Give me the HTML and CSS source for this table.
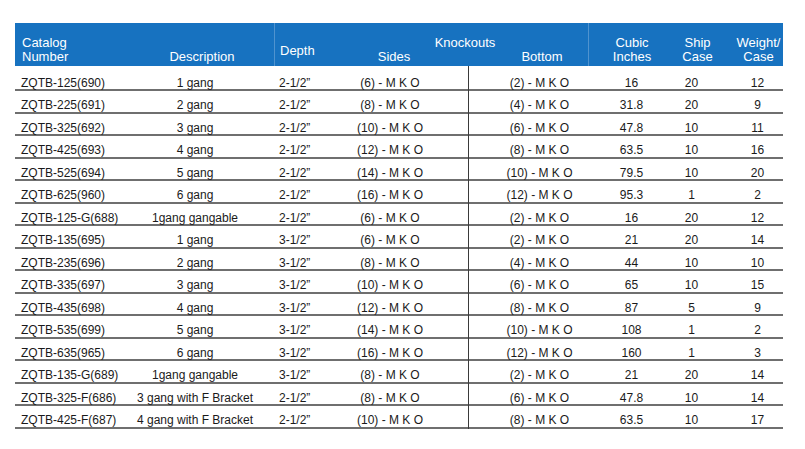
FILE: index.html
```html
<!DOCTYPE html>
<html>
<head>
<meta charset="utf-8">
<link rel="stylesheet" href="styles.css">
</head>
<body>
<div class="sheet">
  <div class="head">
    <div class="h c-cat">Catalog<br>Number</div>
    <div class="h c-desc">Description</div>
    <div class="h c-depth">Depth</div>
    <div class="h c-ko">
      <div class="ko-title">Knockouts</div>
      <div class="ko-sub">
        <span class="ko-sides">Sides</span>
        <span class="ko-bottom">Bottom</span>
      </div>
    </div>
    <div class="h c-cubic">Cubic<br>Inches</div>
    <div class="h c-ship">Ship<br>Case</div>
    <div class="h c-weight">Weight/<br>Case</div>
  </div>
  <div class="body">
    <div class="row first"><div class="cat">ZQTB-125(690)</div><div class="desc">1 gang</div><div class="depth">2-1/2”</div><div class="sides">(6) - M K O</div><div class="bottom">(2) - M K O</div><div class="cubic">16</div><div class="ship">20</div><div class="weight">12</div></div>
    <div class="row"><div class="cat">ZQTB-225(691)</div><div class="desc">2 gang</div><div class="depth">2-1/2”</div><div class="sides">(8) - M K O</div><div class="bottom">(4) - M K O</div><div class="cubic">31.8</div><div class="ship">20</div><div class="weight">9</div></div>
    <div class="row"><div class="cat">ZQTB-325(692)</div><div class="desc">3 gang</div><div class="depth">2-1/2”</div><div class="sides">(10) - M K O</div><div class="bottom">(6) - M K O</div><div class="cubic">47.8</div><div class="ship">10</div><div class="weight">11</div></div>
    <div class="row"><div class="cat">ZQTB-425(693)</div><div class="desc">4 gang</div><div class="depth">2-1/2”</div><div class="sides">(12) - M K O</div><div class="bottom">(8) - M K O</div><div class="cubic">63.5</div><div class="ship">10</div><div class="weight">16</div></div>
    <div class="row"><div class="cat">ZQTB-525(694)</div><div class="desc">5 gang</div><div class="depth">2-1/2”</div><div class="sides">(14) - M K O</div><div class="bottom">(10) - M K O</div><div class="cubic">79.5</div><div class="ship">10</div><div class="weight">20</div></div>
    <div class="row"><div class="cat">ZQTB-625(960)</div><div class="desc">6 gang</div><div class="depth">2-1/2”</div><div class="sides">(16) - M K O</div><div class="bottom">(12) - M K O</div><div class="cubic">95.3</div><div class="ship">1</div><div class="weight">2</div></div>
    <div class="row"><div class="cat">ZQTB-125-G(688)</div><div class="desc">1gang gangable</div><div class="depth">2-1/2”</div><div class="sides">(6) - M K O</div><div class="bottom">(2) - M K O</div><div class="cubic">16</div><div class="ship">20</div><div class="weight">12</div></div>
    <div class="row"><div class="cat">ZQTB-135(695)</div><div class="desc">1 gang</div><div class="depth">3-1/2”</div><div class="sides">(6) - M K O</div><div class="bottom">(2) - M K O</div><div class="cubic">21</div><div class="ship">20</div><div class="weight">14</div></div>
    <div class="row"><div class="cat">ZQTB-235(696)</div><div class="desc">2 gang</div><div class="depth">3-1/2”</div><div class="sides">(8) - M K O</div><div class="bottom">(4) - M K O</div><div class="cubic">44</div><div class="ship">10</div><div class="weight">10</div></div>
    <div class="row"><div class="cat">ZQTB-335(697)</div><div class="desc">3 gang</div><div class="depth">3-1/2”</div><div class="sides">(10) - M K O</div><div class="bottom">(6) - M K O</div><div class="cubic">65</div><div class="ship">10</div><div class="weight">15</div></div>
    <div class="row"><div class="cat">ZQTB-435(698)</div><div class="desc">4 gang</div><div class="depth">3-1/2”</div><div class="sides">(12) - M K O</div><div class="bottom">(8) - M K O</div><div class="cubic">87</div><div class="ship">5</div><div class="weight">9</div></div>
    <div class="row"><div class="cat">ZQTB-535(699)</div><div class="desc">5 gang</div><div class="depth">3-1/2”</div><div class="sides">(14) - M K O</div><div class="bottom">(10) - M K O</div><div class="cubic">108</div><div class="ship">1</div><div class="weight">2</div></div>
    <div class="row"><div class="cat">ZQTB-635(965)</div><div class="desc">6 gang</div><div class="depth">3-1/2”</div><div class="sides">(16) - M K O</div><div class="bottom">(12) - M K O</div><div class="cubic">160</div><div class="ship">1</div><div class="weight">3</div></div>
    <div class="row"><div class="cat">ZQTB-135-G(689)</div><div class="desc">1gang gangable</div><div class="depth">3-1/2”</div><div class="sides">(8) - M K O</div><div class="bottom">(2) - M K O</div><div class="cubic">21</div><div class="ship">20</div><div class="weight">14</div></div>
    <div class="row"><div class="cat">ZQTB-325-F(686)</div><div class="desc">3 gang with F Bracket</div><div class="depth">2-1/2”</div><div class="sides">(8) - M K O</div><div class="bottom">(6) - M K O</div><div class="cubic">47.8</div><div class="ship">10</div><div class="weight">14</div></div>
    <div class="row"><div class="cat">ZQTB-425-F(687)</div><div class="desc">4 gang with F Bracket</div><div class="depth">2-1/2”</div><div class="sides">(10) - M K O</div><div class="bottom">(8) - M K O</div><div class="cubic">63.5</div><div class="ship">10</div><div class="weight">17</div></div>
  </div>
</div>
</body>
</html>
```
FILE: styles.css
```css
html, body {
  margin: 0;
  padding: 0;
  background: #ffffff;
}

body {
  font-family: "Liberation Sans", Arial, sans-serif;
  color: #1a1a1a;
}

.sheet {
  width: 768px;
  margin: 23px 0 0 15px;
}

.head {
  display: grid;
  grid-template-columns: 115px 144px 46px 268px 87px 45px 63px;
  height: 43px;
  background: #1772c0;
  color: #ffffff;
  font-size: 13px;
  line-height: 14px;
}

.h {
  display: flex;
  flex-direction: column;
  justify-content: flex-end;
  padding-bottom: 2px;
  box-sizing: border-box;
}

.c-cat {
  padding-left: 7px;
}

.c-desc {
  text-align: center;
}

.c-depth {
  padding-left: 5px;
  padding-bottom: 8px;
  border-left: 1px solid #4f93cf;
}

.c-ko {
  text-align: center;
}

.ko-title {
  padding-left: 22px;
}

.ko-sub {
  display: flex;
}

.ko-sides {
  width: 148px;
  text-align: center;
}

.ko-bottom {
  width: 120px;
  text-align: center;
  padding-left: 28px;
  box-sizing: border-box;
}

.c-cubic {
  text-align: center;
  border-left: 1px solid #4f93cf;
}

.c-ship {
  text-align: center;
}

.c-weight {
  text-align: center;
  padding-left: 14px;
}

.row {
  display: grid;
  grid-template-columns: 115px 144px 46px 148px 120px 87px 45px 63px;
  height: 22.5px;
  box-sizing: border-box;
  border-bottom: 2px solid #6f6f6f;
  font-size: 12px;
  line-height: 14px;
}

.row > div {
  padding-top: 7px;
  white-space: nowrap;
}

.row.first {
  height: 25px;
}

.row.first > div {
  padding-top: 9.5px;
}

.cat {
  padding-left: 6px;
}

.desc {
  text-align: center;
  padding-right: 14px;
}

.depth {
  padding-left: 5px;
}

.sides {
  text-align: center;
  padding-right: 8px;
}

.bottom {
  text-align: center;
  padding-left: 22px;
  border-left: 1px solid #3a3a3a;
  margin-bottom: -2px;
}

.cubic {
  text-align: center;
}

.ship {
  text-align: center;
  padding-right: 12px;
}

.weight {
  text-align: center;
  padding-left: 12px;
}
```
